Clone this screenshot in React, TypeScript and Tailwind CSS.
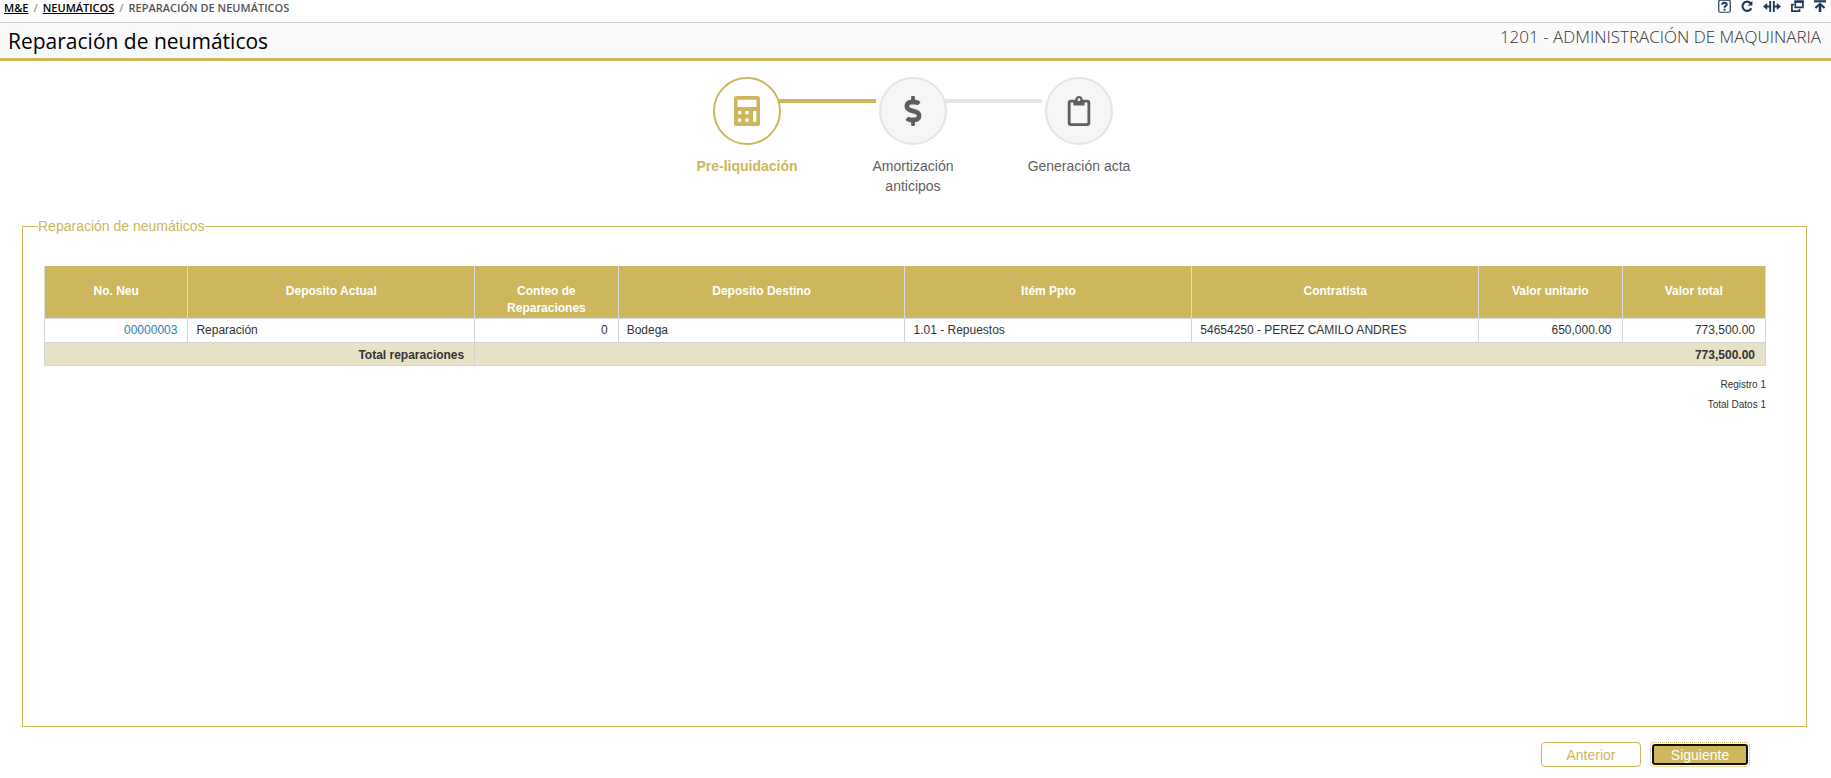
import type { ReactNode } from "react";
import { FaDollarSign, FaRegClipboard } from "react-icons/fa";

const columns = [
  { label: "No. Neu", width: "w-1/12" },
  { label: "Deposito Actual", width: "w-2/12" },
  { label: "Conteo de Reparaciones", width: "w-1/12" },
  { label: "Deposito Destino", width: "w-2/12" },
  { label: "Itém Ppto", width: "w-2/12" },
  { label: "Contratista", width: "w-2/12" },
  { label: "Valor unitario", width: "w-1/12" },
  { label: "Valor total", width: "w-1/12" },
];

const rows = [
  {
    id: "00000003",
    actual: "Reparación",
    count: 0,
    destino: "Bodega",
    item: "1.01 - Repuestos",
    contratista: "54654250 - PEREZ CAMILO ANDRES",
    unitario: "650,000.00",
    total: "773,500.00",
  },
];

function CalculatorIcon() {
  return (
    <svg width="26" height="30" viewBox="0 0 26 30" fill="currentColor" fillRule="evenodd" aria-hidden="true">
      <path d="M2.5 0h21a2.5 2.5 0 0 1 2.5 2.5v25a2.5 2.5 0 0 1-2.5 2.5h-21a2.5 2.5 0 0 1-2.5-2.5v-25a2.5 2.5 0 0 1 2.5-2.5zM3.5 3.8v7.2h19V3.8zM4 15v3.2h3.3v-3.2zM11.4 15v3.2h3.3v-3.2zM4 22.4v3.4h3.3v-3.4zM11.4 22.4v3.4h3.3v-3.4zM19 15v10.8h3.4v-10.8z" />
    </svg>
  );
}

const steps = [
  { label: "Pre-liquidación", icon: <CalculatorIcon />, active: true },
  { label: "Amortización anticipos", icon: <FaDollarSign size={30} />, active: false },
  { label: "Generación acta", icon: <FaRegClipboard size={30} />, active: false },
];

function ToolButton({ label, width, children }: { label: string; width: number; children: ReactNode }) {
  return (
    <button type="button" aria-label={label} className="block text-[#1f3a57]">
      <svg width={width} height="13" viewBox={`0 0 ${width} 13`} fill="none" stroke="currentColor" strokeWidth="2">
        {children}
      </svg>
    </button>
  );
}

function Toolbar() {
  return (
    <div className="flex gap-2.5 pr-[5px]">
      <ToolButton label="Ayuda" width={13}>
        <rect x="0.75" y="0.25" width="11.5" height="12" rx="1.5" strokeWidth="1.2" />
        <path d="M4.2 4.7c0-1.4 1-2 2.2-2s2.3.6 2.3 1.8c0 1.5-2.2 1.4-2.2 3.2M6.5 8.7v1.8" strokeWidth="2" />
      </ToolButton>
      <ToolButton label="Actualizar" width={12}>
        <path d="M9.6 3.2A4.6 4.6 0 1 0 10.3 8.2" strokeWidth="2.1" />
        <path d="M11.4.8v4.8H6.6z" fill="currentColor" stroke="none" />
      </ToolButton>
      <ToolButton label="Dividir" width={18}>
        <path d="M7.2 1v11M10.8 1v11" strokeWidth="1.9" />
        <path d="M2 6.5h5M11 6.5h5" strokeWidth="1.8" />
        <path d="M0 6.5l4.2-3.6v7.2zM18 6.5l-4.2-3.6v7.2z" fill="currentColor" stroke="none" />
      </ToolButton>
      <ToolButton label="Ventanas" width={13}>
        <path d="M4.3 1.4h7.6v6H4.3z" strokeWidth="1.7" />
        <path d="M3 4.7H.9v6.4h7.6V9" strokeWidth="1.7" />
        <path d="M3.5 1.7h9.2" strokeWidth="2.4" />
      </ToolButton>
      <ToolButton label="Subir" width={12}>
        <path d="M0 1.3h12" strokeWidth="2.2" />
        <path d="M6 5v7" strokeWidth="2.6" />
        <path d="M1.4 8L6 4l4.6 4" strokeWidth="2.2" />
      </ToolButton>
    </div>
  );
}

function Stepper() {
  return (
    <ol className="mx-auto flex w-[498px] pt-4">
      {steps.map((step, i) => (
        <li key={step.label} className="flex-1">
          <div className="flex items-start">
            <div className="mt-[22px] h-1 flex-1">
              {i > 0 && <div className={`mr-[3px] h-1 ${steps[i - 1].active ? "bg-[#cdb65b]" : "bg-[#e5e5e5]"}`} />}
            </div>
            <div
              className={`flex h-[68px] w-[68px] items-center justify-center rounded-full border-2 ${
                step.active ? "border-[#cdb65b] bg-white text-[#cdb65b]" : "border-[#e5e5e5] bg-[#f5f6f7] text-[#5f5f5f]"
              }`}
            >
              {step.icon}
            </div>
            <div className="mt-[22px] h-1 flex-1">
              {i < steps.length - 1 && <div className={`-ml-0.5 h-1 ${step.active ? "bg-[#cdb65b]" : "bg-[#e5e5e5]"}`} />}
            </div>
          </div>
          <div
            className={`mx-auto mt-[11px] w-28 text-center text-sm leading-5 ${
              step.active ? "font-bold text-[#cdb65b]" : "text-[#5f5f5f]"
            }`}
          >
            {step.label}
          </div>
        </li>
      ))}
    </ol>
  );
}

const cell = "border border-[#d3d3d3] pr-2.5 pl-2";

function RepairsTable() {
  return (
    <table className="w-full table-fixed border-collapse text-xs leading-[17px] text-[#333]">
      <thead>
        <tr className="h-[52px] bg-[#cdb65b] text-white">
          {columns.map((col) => (
            <th key={col.label} className={`border-x border-b border-[#dcdcdc] px-2 pt-[17px] align-top font-bold ${col.width}`}>
              {col.label}
            </th>
          ))}
        </tr>
      </thead>
      <tbody>
        {rows.map((row) => (
          <tr key={row.id} className="h-6">
            <td className={`${cell} text-right`}>
              <a href="#" className="text-[#337ab7]">{row.id}</a>
            </td>
            <td className={cell}>{row.actual}</td>
            <td className={`${cell} text-right`}>{row.count}</td>
            <td className={cell}>{row.destino}</td>
            <td className={cell}>{row.item}</td>
            <td className={cell}>{row.contratista}</td>
            <td className={`${cell} text-right`}>{row.unitario}</td>
            <td className={`${cell} text-right`}>{row.total}</td>
          </tr>
        ))}
      </tbody>
      <tfoot>
        <tr className="h-[23px] bg-[#e7e2c6] font-bold">
          <td colSpan={2} className={`${cell} pt-1 text-right`}>Total reparaciones</td>
          <td colSpan={6} className={`${cell} pt-1 text-right`}>773,500.00</td>
        </tr>
      </tfoot>
    </table>
  );
}

export default function App() {
  return (
    <div className="bg-white font-['Liberation_Sans',Arial,sans-serif] text-[#333]">
      <header className="font-['Open_Sans','Segoe_UI',sans-serif]">
        <div className="flex h-[22px] items-start justify-between">
          <nav aria-label="Ruta" className="flex gap-[5px] pl-1 text-[11px] leading-4 font-semibold text-[#555]">
            <a href="#" className="text-black underline">M&amp;E</a>
            <span className="text-[#999]">/</span>
            <a href="#" className="text-black underline">NEUMÁTICOS</a>
            <span className="text-[#999]">/</span>
            <span>REPARACIÓN DE NEUMÁTICOS</span>
          </nav>
          <Toolbar />
        </div>
        <div className="flex h-[39px] justify-between border-t border-b-[3px] border-t-[#ccc] border-b-[#cdb65b] bg-[#fafafa] pr-[10px] pl-2">
          <h1 className="text-[21px] leading-9 text-black">Reparación de neumáticos</h1>
          <span className="text-[17px] leading-7 font-light text-[#333]">1201 - ADMINISTRACIÓN DE MAQUINARIA</span>
        </div>
      </header>

      <main className="pr-[5px]">
        <Stepper />

        <fieldset className="mt-5 mr-[19px] ml-[22px] h-[511px] border border-[#cdb65b] pr-10 pl-[21px]">
          <legend className="-ml-1.5 text-sm leading-5 text-[#cdb65b]">Reparación de neumáticos</legend>
          <div className="pt-[30px]">
            <RepairsTable />
            <div className="mt-[9px] text-right text-[10px] leading-5">
              <div>Registro 1</div>
              <div>Total Datos 1</div>
            </div>
          </div>
        </fieldset>

        <div className="mt-[15px] mr-[76px] flex justify-end gap-[9px] pb-[11px] text-sm">
          <button type="button" className="h-[25px] w-[100px] rounded border border-[#cdb65b] bg-white text-[#cdb65b]">
            Anterior
          </button>
          <button type="button" className="h-[25px] w-[100px] rounded border border-dotted border-[#cdb65b] bg-white p-px text-white">
            <span className="flex h-full items-center justify-center rounded-[3px] border-2 border-[#111] bg-[#cdb65b]">
              Siguiente
            </span>
          </button>
        </div>
      </main>
    </div>
  );
}
